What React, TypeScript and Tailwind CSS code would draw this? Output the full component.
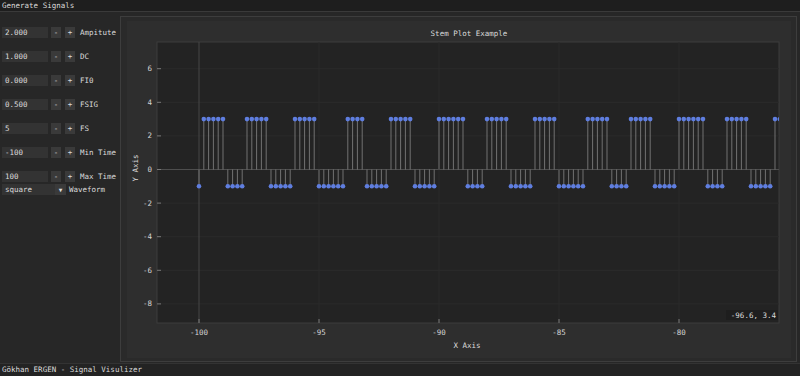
const mono = "font-['DejaVu_Sans_Mono',monospace]";

// plot mapping (svg coords inside the frame)
const PX0 = 30;
const PY0 = 21;
const PW = 622;
const PH = 281;
const X = (t: number) => 72 + (t + 100) * 24;
const Y = (v: number) => 148.5 - v * 16.8;

function makeSignal() {
  const pts: { t: number; v: number }[] = [];
  for (let k = 0; k < 1000; k++) {
    const t = -100 + k / 5;
    if (t > -75.7) break;
    const s = Math.sin(2 * Math.PI * 0.5 * t);
    pts.push({ t, v: 2 * (s > 0 ? 1 : -1) + 1 });
  }
  return pts;
}

function Row({ value, label }: { value: string; label: string }) {
  return (
    <div className="flex items-center h-[11px]">
      <div className="ml-[2px] w-[46px] h-[11px] bg-[#333333] pl-[3px] flex items-center">{value}</div>
      <div className="ml-[3px] w-[10px] h-[11px] bg-[#3a3a3a] flex items-center justify-center">-</div>
      <div className="ml-[4px] w-[10px] h-[11px] bg-[#3a3a3a] flex items-center justify-center">+</div>
      <div className="ml-[5px]">{label}</div>
    </div>
  );
}

function StemPlot() {
  const pts = makeSignal();
  const xticks = [-100, -95, -90, -85, -80];
  const yticks = [6, 4, 2, 0, -2, -4, -6, -8];
  return (
    <svg width={664} height={337} className={`${mono} block`}>
      <defs>
        <clipPath id="plotclip">
          <rect x={PX0} y={PY0} width={PW} height={PH} />
        </clipPath>
      </defs>
      <rect x={0} y={0} width={664} height={337} fill="#2e2e2e" />
      <text x={342} y={15} fontSize={7.5} fill="#dcdcdc" textAnchor="middle">Stem Plot Example</text>

      <rect x={PX0} y={PY0} width={PW} height={PH} fill="#232323" stroke="#3c3c3c" strokeWidth={1} />

      <g clipPath="url(#plotclip)">
        {yticks.map((v) => (
          <line key={v} x1={PX0} x2={PX0 + PW} y1={Y(v)} y2={Y(v)} stroke={v === 0 ? "#4e4e4e" : "#2b2b2b"} />
        ))}
        {xticks.map((t) => (
          <line key={t} x1={X(t)} x2={X(t)} y1={PY0} y2={PY0 + PH} stroke={t === -100 ? "#474747" : "#2b2b2b"} />
        ))}
        {pts.map((p) => (
          <line key={"s" + p.t} x1={X(p.t)} x2={X(p.t)} y1={Y(0)} y2={Y(p.v)} stroke="#8c8c8c" strokeOpacity={0.75} />
        ))}
        {pts.map((p) => (
          <circle key={"m" + p.t} cx={X(p.t)} cy={Y(p.v)} r={2.3} fill="#5f7ee0" />
        ))}
      </g>

      {xticks.map((t) => (
        <g key={t}>
          <line x1={X(t)} x2={X(t)} y1={PY0 + PH} y2={PY0 + PH - 4} stroke="#7a7a7a" />
          <text x={X(t)} y={314} fontSize={7.5} fill="#d4d4d4" textAnchor="middle">{t}</text>
        </g>
      ))}
      {yticks.map((v) => (
        <g key={v}>
          <line x1={PX0} x2={PX0 + 4} y1={Y(v)} y2={Y(v)} stroke="#7a7a7a" />
          <text x={25} y={Y(v) + 2.5} fontSize={7.5} fill="#d4d4d4" textAnchor="end">{v}</text>
        </g>
      ))}

      <text x={340} y={327} fontSize={7.5} fill="#dcdcdc" textAnchor="middle">X Axis</text>
      <text x={0} y={0} fontSize={7.5} fill="#dcdcdc" textAnchor="middle" transform="translate(11 147) rotate(-90)">Y Axis</text>

      <rect x={599} y={289} width={52} height={10} fill="#1e1e1e" />
      <text x={649} y={297} fontSize={7.5} fill="#dcdcdc" textAnchor="end">-96.6, 3.4</text>
    </svg>
  );
}

export default function App() {
  const rows = [
    ["2.000", "Ampitute"],
    ["1.000", "DC"],
    ["0.000", "FI0"],
    ["0.500", "FSIG"],
    ["5", "FS"],
    ["-100", "Min Time"],
    ["100", "Max Time"],
  ];
  return (
    <div className={`w-[800px] h-[376px] bg-[#272727] text-[#dcdcdc] text-[7.5px] leading-none ${mono} flex flex-col overflow-hidden`}>
      <div className="h-[12px] bg-[#1e1e1e] border-b border-[#3a3a3a] pl-[2px] flex items-center">Generate Signals</div>

      <div className="h-[351px] flex">
        <div className="w-[120px] pt-[15px] flex flex-col">
          <div className="flex flex-col gap-[13px]">
            {rows.map(([v, l]) => (
              <Row key={l} value={v} label={l} />
            ))}
          </div>
          <div className="mt-[2px] flex items-center h-[11px]">
            <div className="ml-[2px] w-[64px] h-[11px] bg-[#333333] flex items-center">
              <span className="pl-[3px] flex-1">square</span>
              <span className="w-[11px] h-[11px] bg-[#3a3a3a] flex items-center justify-center text-[6px]">▼</span>
            </div>
            <div className="ml-[3px]">Waveform</div>
          </div>
        </div>

        <div className="mt-[4px] w-[677px] h-[346px] border border-[#3d3d3d] bg-[#2a2a2a] pt-[4px] pl-[6px] pr-[5px] pb-[3px]">
          <StemPlot />
        </div>
      </div>

      <div className="flex-1 bg-[#232323] border-t border-[#333333] pl-[2px] flex items-center">Gökhan ERGEN - Signal Visulizer</div>
    </div>
  );
}
